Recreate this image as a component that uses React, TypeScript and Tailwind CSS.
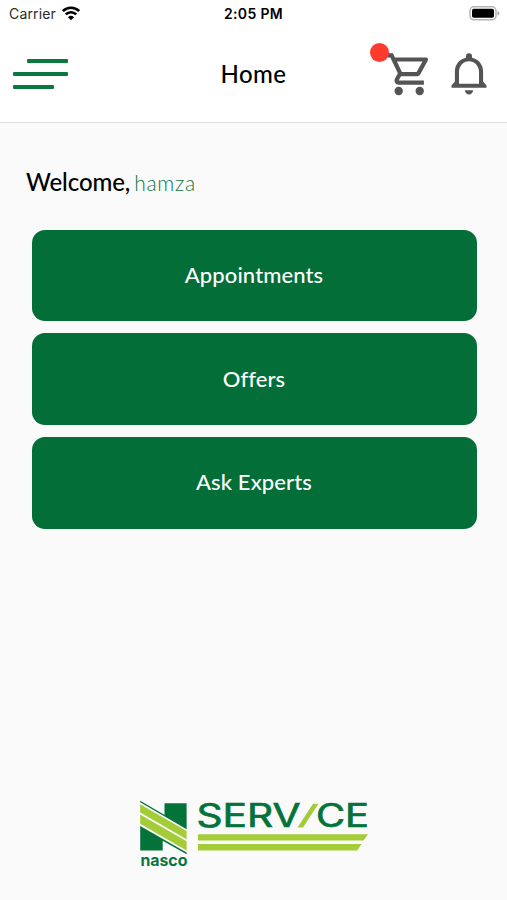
import React from 'react';

const actions = ['Appointments', 'Offers', 'Ask Experts'];

const StatusBar: React.FC = () => (
  <div className="relative flex h-7 items-center justify-between pb-px pl-[9px] pr-[7px] font-['Inter',sans-serif] text-black">
    <div className="flex items-center gap-[6px]">
      <span className="text-[14px] leading-7 tracking-[0.15px] text-[#2b2b2b]">Carrier</span>
      <svg width="18" height="15" viewBox="0 0 18 15" fill="none" stroke="#000" strokeWidth="2.7">
        <path d="M.9 5.1a11.5 11.5 0 0 1 16.2 0" />
        <path d="M3.8 8.4a7.4 7.4 0 0 1 10.4 0" />
        <path d="M9 14.2 6 11.2a4.3 4.3 0 0 1 6 0z" fill="#000" stroke="none" />
      </svg>
    </div>
    <span className="absolute inset-x-0 text-center text-[14px] font-semibold leading-7 tracking-[0.35px]">2:05 PM</span>
    <svg width="31" height="15" viewBox="0 0 31 15">
      <rect x="1" y=".8" width="26" height="13" rx="3.8" fill="#fff" stroke="#b5b5b5" strokeWidth="1.5" />
      <rect x="3" y="2.8" width="22" height="9" rx="1.8" fill="#000" />
      <path d="M28.5 5v4.6c1.2-.4 1.9-1.2 1.9-2.3s-.7-1.9-1.9-2.3z" fill="#aaa" />
    </svg>
  </div>
);

const CartIcon: React.FC = () => (
  <svg width="50.4" height="50.4" viewBox="0 0 24 24" fill="#545454">
    <path d="M15.55 13c.75 0 1.41-.41 1.75-1.03l3.58-6.49A.996.996 0 0 0 20.01 4H5.21l-.94-2H1v2h2l3.6 7.59-1.35 2.44C4.52 15.37 5.48 17 7 17h12v-2H7l1.1-2h7.45zM6.16 6h12.15l-2.76 5H8.53L6.16 6z" />
    <circle cx="7" cy="20" r="2" />
    <circle cx="17" cy="20" r="2" />
  </svg>
);

const BellIcon: React.FC = () => (
  <svg width="36" height="42" viewBox="0 0 36 42" fill="#545454">
    <path d="M18 .2a3 3 0 0 0-3 3v1.6C8.5 6.2 3.9 11.5 3.9 18.5v10L.5 32.5v2.3h35v-2.3l-3.4-4v-10c0-7-4.6-12.3-11.1-13.7V3.2a3 3 0 0 0-3-3zM18 8.2c5.6 0 10 4.6 10 10.7v11.9H8V18.9C8 12.8 12.4 8.2 18 8.2z" />
    <path d="M13.8 37.2h8.4c-.4 2.5-2 4.2-4.2 4.2s-3.8-1.7-4.2-4.2z" />
  </svg>
);

const Header: React.FC = () => (
  <header className="relative flex h-[95px] items-center justify-between border-b border-[#dedede] pb-[2px] pl-[13px] pr-5">
    <button className="flex w-[55px] flex-col gap-[9px]" aria-label="Menu">
      <span className="ml-[14px] h-[4.3px] w-[41px] rounded-[1px] bg-[#0b7840]" />
      <span className="h-[4.3px] w-[55px] rounded-[1px] bg-[#0b7840]" />
      <span className="h-[4.3px] w-[41px] rounded-[1px] bg-[#0b7840]" />
    </button>
    <h1 className="pointer-events-none absolute inset-x-0 text-center text-[24px] font-medium leading-8 tracking-[0.4px] text-black">
      Home
    </h1>
    <div className="flex items-center gap-[17px]">
      <div className="relative">
        <CartIcon />
        <span className="absolute -left-[14px] -top-[6px] h-[19px] w-[19px] rounded-full bg-[#ff3b30]" />
      </div>
      <BellIcon />
    </div>
  </header>
);

const Logo: React.FC = () => (
  <svg width="231" height="80" viewBox="0 -8 231 80" className="font-['Inter',sans-serif]">
    <g fill="#04733a">
      <path d="M26.5 3.3h22.1v25.2L26.5 15.6z" />
      <path d="M2.2.8l46.4 27v1.5L2.2 2.3z" />
      <path d="M2.2 26l46.4 26.5v1.8L24.7 40.7v9.9H2.2z" />
    </g>
    <g fill="#a4cc39">
      <path d="M2.2 4.2l46.4 26.8v8.2L2.2 12.4z" />
      <path d="M2.2 14.6l46.4 26.7v9.2L2.2 23.8z" />
      <path d="M175 3.8h5.5L165 27.5h-5.5z" />
      <path d="M60 34.2h170l-4.500 6.300H60zM60 44h163.500l-4.300 6.500H60z" />
    </g>
    <g fill="#04733a" stroke="#04733a">
      <text x="2.500" y="66.300" fontSize="16.500" fontWeight="600" strokeWidth=".2" textLength="47" lengthAdjust="spacingAndGlyphs">nasco</text>
      <text x="58.500" y="27.300" fontSize="32" fontWeight="400" strokeWidth=".7" textLength="104" lengthAdjust="spacingAndGlyphs">SERV</text>
      <text x="178" y="27.300" fontSize="32" fontWeight="400" strokeWidth=".7" textLength="53" lengthAdjust="spacingAndGlyphs">CE</text>
    </g>
  </svg>
);

const App: React.FC = () => {
  return (
    <div className="flex h-[900px] w-[507px] flex-col overflow-hidden bg-[#fafafa] font-['Lato','Open_Sans',sans-serif]">
      <div className="bg-white">
        <StatusBar />
        <Header />
      </div>

      <main className="flex flex-1 flex-col items-center">
        <p className="mt-[43px] flex w-full items-baseline gap-[4px] pl-[26px] leading-8">
          <span className="text-[24px] font-medium tracking-[-0.1px] text-black">Welcome,</span>
          <span className="text-[21px] font-light tracking-[0.7px] text-[#0b7840]">hamza</span>
        </p>

        <div className="ml-px mt-[30.5px] flex w-[445px] flex-col gap-3">
          {actions.map((label) => (
            <button
              key={label}
              className="h-[91.8px] rounded-[13px] bg-[#036e37] pb-[2px] text-[22px] font-medium tracking-[0.1px] text-white"
            >
              {label}
            </button>
          ))}
        </div>

        <div className="mb-[28px] mt-auto">
          <Logo />
        </div>
      </main>
    </div>
  );
};

export default App;
